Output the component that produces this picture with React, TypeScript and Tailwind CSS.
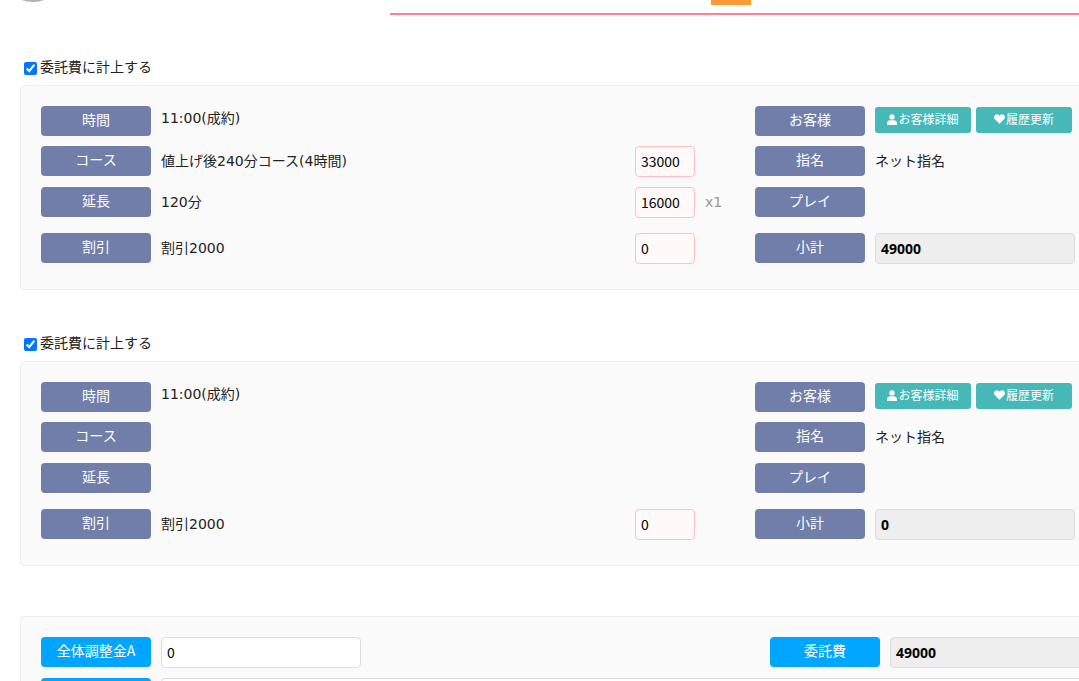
import React from 'react'

const font = 'font-["Noto_Sans_CJK_JP","Liberation_Sans",sans-serif]'
const bodyFont = 'font-["DejaVu_Sans","Noto_Sans_CJK_JP",sans-serif]'

function Label({ children, blue }: { children: React.ReactNode; blue?: boolean }) {
  return (
    <div className={`w-[110px] h-[30px] shrink-0 pb-[3px] rounded-[4px] flex items-center justify-center text-[14px] text-white ${blue ? 'bg-[#00a5ff]' : 'bg-[#717eaa]'}`}>
      {children}
    </div>
  )
}

function PriceInput({ value }: { value: string }) {
  return (
    <input
      readOnly
      value={value}
      className="w-[60px] h-[31px] px-[5px] pb-[2px] text-[14px] text-black bg-[#fff9f9] border border-[#ffc0c0] rounded-[4px] outline-none"
    />
  )
}

function GrayBox({ value, className }: { value: string; className: string }) {
  return (
    <div className={`h-[31px] px-[5px] flex items-center text-[14px] font-bold font-["Noto_Sans",sans-serif] text-black bg-[#eeeeee] border border-[#dddddd] rounded-[4px] ${className}`}>
      {value}
    </div>
  )
}

function TealButton({ icon, children }: { icon: React.ReactNode; children: React.ReactNode }) {
  return (
    <div className="w-[96px] h-[26px] shrink-0 pb-[2px] rounded-[3px] bg-[#46b8b8] text-white text-[12px] flex items-center justify-center">
      {icon}
      {children}
    </div>
  )
}

function UserIcon() {
  return (
    <svg width="10" height="11" viewBox="0 0 10 11" className="mr-px" fill="white">
      <circle cx="5" cy="2.9" r="2.7" />
      <path d="M0 11V9.2C0 7.4 1.4 6.2 3 6.2h4c1.6 0 3 1.2 3 3V11z" />
    </svg>
  )
}

function HeartIcon() {
  return (
    <svg width="11" height="10" viewBox="0 0 12 11" className="mr-px" fill="white">
      <path d="M6 10.8 1 5.9C-.4 4.5-.3 2.2 1.1 1c1.3-1.1 3.2-.9 4.4.3l.5.5.5-.5C7.7.1 9.6-.1 10.9 1c1.4 1.2 1.5 3.5.1 4.9z" />
    </svg>
  )
}

function Row({ left, value, valueClass, price, extra, rightLabel, right, className }: {
  left: string
  value?: string
  valueClass?: string
  price?: string
  extra?: string
  rightLabel: string
  right?: React.ReactNode
  className: string
}) {
  return (
    <div className={`flex items-start ${className}`}>
      <Label>{left}</Label>
      <div className={`w-[474px] ml-[10px] h-[30px] flex items-center text-[14px] text-[#222222] shrink-0 ${bodyFont} ${valueClass ?? ''}`}>{value}</div>
      <div className="w-[60px] shrink-0">{price && <PriceInput value={price} />}</div>
      <div className={`w-[60px] shrink-0 pl-[10px] h-[30px] flex items-center text-[14px] text-[#999999] ${bodyFont}`}>{extra}</div>
      <Label>{rightLabel}</Label>
      <div className="ml-[10px]">{right}</div>
    </div>
  )
}

function Section({ course, extension, extensionCount, coursePrice, extensionPrice, subtotal }: {
  course?: string
  extension?: string
  extensionCount?: string
  coursePrice?: string
  extensionPrice?: string
  subtotal: string
}) {
  return (
    <section>
      <label className="flex items-center h-[17px] pl-[24px] text-[14px] text-[#222222]">
        <input type="checkbox" defaultChecked className="w-[13px] h-[13px] m-0 mr-[3px] mt-[1px] accent-[#0075ff]" />
        <span className="-mt-[3px]">委託費に計上する</span>
      </label>
      <div className="mt-[9px] ml-[20px] w-[1200px] pt-[20px] pb-[25px] pl-[20px] bg-[#fafafa] border border-[#eeeeee] rounded-[4px]">
        <Row
          className="h-[30px] mb-[10px]"
          left="時間"
          value="11:00(成約)"
          valueClass="pb-[6px]"
          rightLabel="お客様"
          right={
            <div className="flex gap-[5px] pt-px items-center">
              <TealButton icon={<UserIcon />}>お客様詳細</TealButton>
              <TealButton icon={<HeartIcon />}>履歴更新</TealButton>
              <span className="text-[14px] text-[#cc3300] ml-[5px]">2</span>
            </div>
          }
        />
        <Row
          className="h-[31px] mb-[10px]"
          left="コース"
          value={course}
          price={coursePrice}
          rightLabel="指名"
          right={<div className="h-[30px] pb-[2px] flex items-center text-[14px] text-[#222222]">ネット指名</div>}
        />
        <Row
          className="h-[31px] mb-[15px]"
          left="延長"
          value={extension}
          price={extensionPrice}
          extra={extensionCount}
          rightLabel="プレイ"
        />
        <Row
          className="h-[31px]"
          left="割引"
          value="割引2000"
          price="0"
          rightLabel="小計"
          right={<GrayBox value={subtotal} className="w-[200px]" />}
        />
      </div>
    </section>
  )
}

export default function App() {
  return (
    <div className={`w-[1079px] h-[681px] overflow-hidden bg-white ${font}`}>
      {/* header remnant */}
      <div className="h-[15px] flex items-start">
        <div className="w-[24px] h-[2px] ml-[21px] overflow-hidden shrink-0">
          <div className="w-[68px] h-[68px] -ml-[22px] -mt-[66px] rounded-full bg-[#b0b0b0]" />
        </div>
        <div className="ml-[345px] flex-1 h-[15px] border-b-2 border-[#ff7f9b]">
          <div className="ml-[321px] w-[40px] h-[5px] bg-[#ff9933]" />
        </div>
      </div>

      <div className="h-[44px]" />
      <Section
        course="値上げ後240分コース(4時間)"
        extension="120分"
        extensionCount="x1"
        coursePrice="33000"
        extensionPrice="16000"
        subtotal="49000"
      />
      <div className="h-[45px]" />
      <Section subtotal="0" />

      <div className="mt-[50px] ml-[20px] w-[1200px] pt-[20px] pl-[20px] bg-[#fafafa] border border-[#eeeeee] rounded-[4px]">
        <div className="flex items-start h-[31px] mb-[10px]">
          <Label blue>全体調整金A</Label>
          <input
            readOnly
            value="0"
            className="ml-[10px] w-[200px] h-[31px] px-[5px] pb-[2px] text-[14px] text-black bg-white border border-[#dddddd] rounded-[4px] outline-none"
          />
          <div className="w-[409px] shrink-0" />
          <Label blue>委託費</Label>
          <GrayBox value="49000" className="ml-[10px] w-[300px]" />
        </div>
        <div className="flex items-start">
          <Label blue>{''}</Label>
          <div className="ml-[10px] w-[1000px] h-[31px] bg-white border border-[#dddddd] rounded-[4px]" />
        </div>
      </div>
    </div>
  )
}
